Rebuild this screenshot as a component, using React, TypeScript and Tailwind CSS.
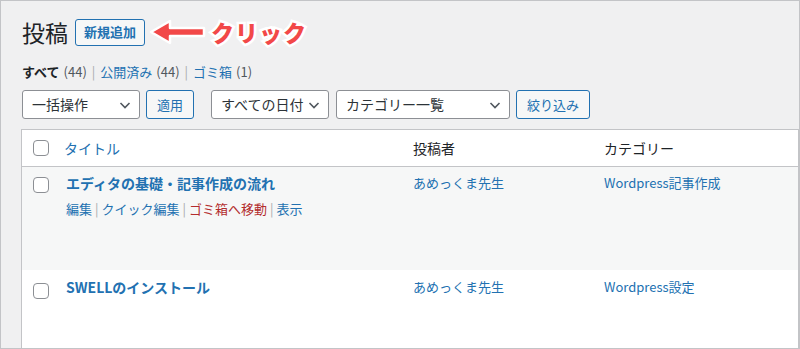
import React from "react";

const font = { fontFamily: '"Noto Sans CJK JP", "Noto Sans", sans-serif' };

function Chevron() {
    return (
        <svg width="16" height="16" viewBox="0 0 16 16" className="shrink-0">
            <path d="M3.5 6 L8 10.5 L12.5 6" fill="none" stroke="#50575e" strokeWidth="1.6" />
        </svg>
    );
}

function Select({ label, width }: { label: string; width: string }) {
    return (
        <div className={`${width} h-[29px] flex items-center justify-between pl-[9px] pr-[6px] bg-white border border-[#8c8f94] rounded-[3px] text-[14px] text-[#2c3338]`}>
            <span>{label}</span>
            <Chevron />
        </div>
    );
}

function Button({ label, width }: { label: string; width: string }) {
    return (
        <div className={`${width} h-[29px] flex items-center justify-center bg-[#f6f7f7] border border-[#2271b1] rounded-[3px] text-[13px] text-[#2271b1]`}>
            {label}
        </div>
    );
}

function Checkbox() {
    return <div className="w-[16px] h-[16px] bg-white border border-[#8c8f94] rounded-[4px] shrink-0"></div>;
}

function Arrow() {
    return (
        <svg width="60" height="26" viewBox="0 0 60 26" className="shrink-0">
            <path d="M3 13 L22 2 L22 9 L56 9 L56 17 L22 17 L22 24 Z" fill="#f24848" stroke="white" strokeWidth="2.5" strokeLinejoin="round" />
        </svg>
    );
}

export default function App() {
    const posts = [
        { title: "エディタの基礎・記事作成の流れ", author: "あめっくま先生", category: "Wordpress記事作成", actions: true },
        { title: "SWELLのインストール", author: "あめっくま先生", category: "Wordpress設定", actions: false },
    ];
    return (
        <div style={font} className="w-[800px] h-[349px] overflow-hidden border border-[#c3c4c7] bg-[#f0f0f1] pl-[20px]">
            <div className="flex items-center mt-[18px] h-[26px]">
                <h1 className="text-[23px] leading-[26px] text-[#1d2327] ml-[1px]">投稿</h1>
                <div className="ml-[7px] w-[70px] h-[27px] flex items-center justify-center bg-[#f6f7f7] border border-[#2271b1] rounded-[3px] text-[13px] font-semibold text-[#2271b1]">
                    新規追加
                </div>
                <div className="ml-[3px]">
                    <Arrow />
                </div>
                <span className="ml-[3px] text-[23px] font-black tracking-[1px] text-[#f24848] [-webkit-text-stroke:5px_white] [paint-order:stroke_fill]">
                    クリック
                </span>
            </div>

            <div className="mt-[17px] h-[20px] flex items-center text-[13px] ml-[1px]">
                <span className="font-bold text-[#1d2327]">すべて</span>
                <span className="ml-[4px] text-[#50575e]">(44)</span>
                <span className="mx-[5px] text-[#a7aaad]">|</span>
                <span className="text-[#2271b1]">公開済み</span>
                <span className="ml-[4px] text-[#50575e]">(44)</span>
                <span className="mx-[5px] text-[#a7aaad]">|</span>
                <span className="text-[#2271b1]">ゴミ箱</span>
                <span className="ml-[4px] text-[#50575e]">(1)</span>
            </div>

            <div className="mt-[8px] flex items-center ml-[1px]">
                <Select label="一括操作" width="w-[118px]" />
                <div className="ml-[6px]"><Button label="適用" width="w-[48px]" /></div>
                <div className="ml-[17px]"><Select label="すべての日付" width="w-[118px]" /></div>
                <div className="ml-[7px]"><Select label="カテゴリー一覧" width="w-[174px]" /></div>
                <div className="ml-[6px]"><Button label="絞り込み" width="w-[74px]" /></div>
            </div>

            <div className="mt-[10px] w-[778px] border-t border-l border-r border-[#c3c4c7] bg-white">
                <div className="h-[37px] flex items-center border-b border-[#c3c4c7] text-[14px]">
                    <div className="w-[53px] pl-[11px]"><Checkbox /></div>
                    <div className="w-[349px] ml-[-11px] text-[#2271b1]">タイトル</div>
                    <div className="w-[191px] text-[#1d2327]">投稿者</div>
                    <div className="text-[#1d2327]">カテゴリー</div>
                </div>
                {posts.map((post, i) => (
                    <div key={i} className={`${i % 2 === 0 ? "bg-[#f6f7f7] h-[103px] pt-[6px]" : "bg-white h-[90px] pt-[7px]"} flex items-start`}>
                        <div className={`w-[53px] pl-[11px] ${i % 2 === 0 ? "pt-[4px]" : "pt-[6px]"}`}><Checkbox /></div>
                        <div className="w-[347px] ml-[-9px]">
                            <div className="text-[14px] leading-[20px] font-bold text-[#2271b1]">{post.title}</div>
                            {post.actions && (
                                <div className="mt-[6px] text-[13px] leading-[20px] flex items-center">
                                    <span className="text-[#2271b1]">編集</span>
                                    <span className="mx-[3px] text-[#a7aaad]">|</span>
                                    <span className="text-[#2271b1]">クイック編集</span>
                                    <span className="mx-[3px] text-[#a7aaad]">|</span>
                                    <span className="text-[#b32d2e]">ゴミ箱へ移動</span>
                                    <span className="mx-[3px] text-[#a7aaad]">|</span>
                                    <span className="text-[#2271b1]">表示</span>
                                </div>
                            )}
                        </div>
                        <div className="w-[191px] text-[13px] leading-[20px] text-[#2271b1]">{post.author}</div>
                        <div className="text-[13px] leading-[20px] text-[#2271b1]">{post.category}</div>
                    </div>
                ))}
            </div>
        </div>
    );
}
